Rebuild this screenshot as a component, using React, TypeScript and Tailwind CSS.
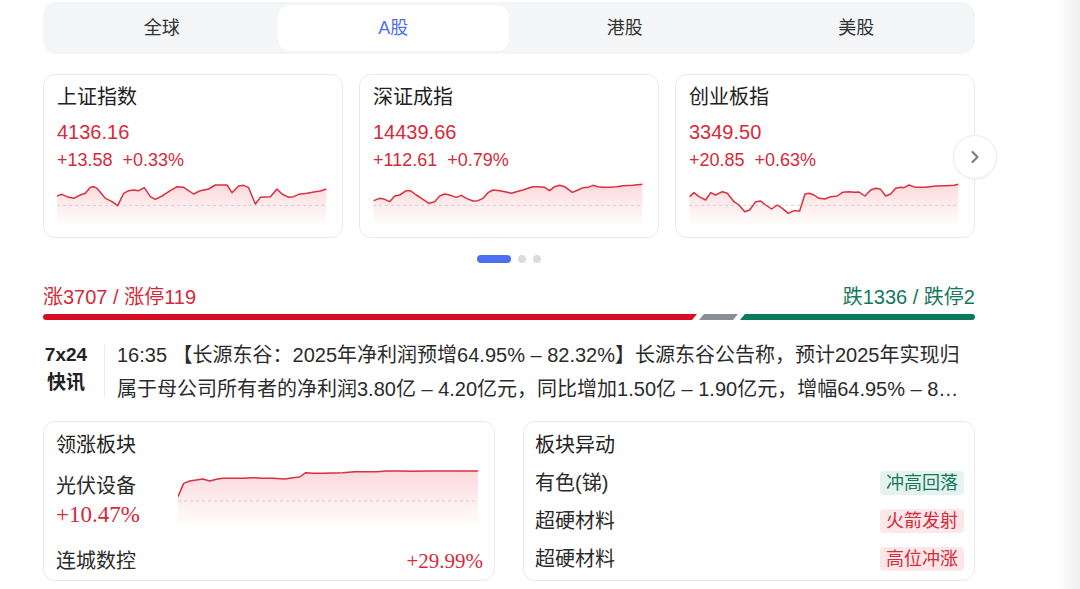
import { ChevronRight } from "lucide-react";

const tabs = ["全球", "A股", "港股", "美股"];

const indices = [
  {
    name: "上证指数",
    value: "4136.16",
    change: "+13.58",
    pct: "+0.33%",
    line:
      "50,378 65,373 80,380 100,385 120,375 135,370 150,352 160,350 170,355 195,385 215,395 232,407 250,370 265,362 280,360 295,362 312,353 330,380 345,388 365,378 385,365 410,350 430,352 460,372 480,362 505,357 525,345 560,345 575,368 595,348 610,346 625,353 645,402 660,382 690,380 710,357 725,372 745,382 760,380 775,373 800,370 825,365 840,363 858,357",
  },
  {
    name: "深证成指",
    value: "14439.66",
    change: "+112.61",
    pct: "+0.79%",
    line:
      "52,392 70,385 85,388 100,395 115,378 130,375 150,362 162,362 180,375 200,388 218,400 235,395 250,378 265,372 280,375 300,382 315,376 330,385 350,393 365,392 380,385 395,368 410,360 430,362 450,366 465,370 480,365 500,360 515,355 530,350 545,350 565,352 580,362 595,350 610,346 625,350 648,367 665,360 680,353 695,352 710,346 725,350 740,352 760,352 780,350 800,347 830,346 858,343",
  },
  {
    name: "创业板指",
    value: "3349.50",
    change: "+20.85",
    pct: "+0.63%",
    line:
      "52,380 65,368 80,380 100,390 115,368 130,375 150,365 165,370 185,395 200,405 217,425 232,420 250,395 265,393 280,405 298,417 315,405 330,415 348,430 365,422 382,423 398,372 410,370 425,375 440,385 458,387 475,380 495,378 510,367 530,365 545,367 560,366 578,378 595,360 610,355 625,358 640,378 655,372 670,355 685,352 695,353 710,345 730,352 760,352 790,348 820,347 845,346 858,343",
  },
];

const sectorLine =
  "415,245 432,205 450,198 470,195 490,192 510,198 530,193 550,190 580,190 610,190 640,188 670,190 700,190 735,192 760,188 780,186 798,173 820,175 850,175 880,174 910,173 945,170 980,170 1010,170 1040,168 1080,168 1120,169 1160,168 1200,168 1250,168 1315,168";

const moves = [
  { name: "有色(锑)", tag: "冲高回落", up: false },
  { name: "超硬材料", tag: "火箭发射", up: true },
  { name: "超硬材料", tag: "高位冲涨", up: true },
];

function Spark({
  id,
  points,
  x0,
  x1,
  top,
  bottom,
  base,
  w,
  h,
}: {
  id: string;
  points: string;
  x0: number;
  x1: number;
  top: number;
  bottom: number;
  base: number;
  w: number;
  h: number;
}) {
  const first = points.split(" ")[0].split(",")[0];
  const last = points.split(" ").slice(-1)[0].split(",")[0];
  return (
    <svg
      width={w}
      height={h}
      viewBox={`${x0} ${top} ${x1 - x0} ${bottom - top}`}
      preserveAspectRatio="none"
      className="block"
    >
      <defs>
        <linearGradient id={id} x1="0" y1="0" x2="0" y2="1">
          <stop offset="0" stopColor="#f04452" stopOpacity="0.2" />
          <stop offset="1" stopColor="#f04452" stopOpacity="0" />
        </linearGradient>
      </defs>
      <polygon points={`${first},${bottom} ${points} ${last},${bottom}`} fill={`url(#${id})`} />
      <line
        x1={x0}
        x2={x1}
        y1={base}
        y2={base}
        stroke="#cfcfd3"
        strokeWidth="1"
        strokeDasharray="3 3"
        vectorEffect="non-scaling-stroke"
      />
      <polyline
        points={points}
        fill="none"
        stroke="#d8303d"
        strokeWidth="1.5"
        strokeLinejoin="round"
        vectorEffect="non-scaling-stroke"
      />
    </svg>
  );
}

export default function App() {
  return (
    <div className="flex min-h-[589px] bg-white font-['Liberation_Sans','Noto_Sans_CJK_SC',sans-serif] text-[#2b2b2b]">
      <div className="w-[1056px] pl-[43px]">
        <div className="w-[932px]">
          {/* market tabs */}
          <div className="mt-[2px] grid h-[52px] grid-cols-4 rounded-[14px] bg-[#f4f5f7] p-[3px]">
            {tabs.map((t) => (
              <div
                key={t}
                className={
                  t === "A股"
                    ? "flex items-center justify-center rounded-[12px] bg-white text-[18px] text-[#4e6ef2]"
                    : "flex items-center justify-center text-[18px] text-[#333]"
                }
              >
                {t}
              </div>
            ))}
          </div>

          {/* index cards */}
          <div className="relative mt-[20px] grid grid-cols-3 gap-[16px]">
            {indices.map((c, i) => (
              <div key={c.name} className="h-[164px] rounded-[12px] border border-[#e8e8eb] px-[13px] pt-[8px]">
                <div className="text-[20px] leading-[28px] text-[#222]">{c.name}</div>
                <div className="mt-[7px] text-[20px] leading-[28px] text-[#d42a3a]">{c.value}</div>
                <div className="mt-[1px] flex gap-[10px] text-[18px] leading-[26px] text-[#d42a3a]">
                  <span>{c.change}</span>
                  <span>{c.pct}</span>
                </div>
                <div className="mt-[7px]">
                  <Spark
                    id={`g${i}`}
                    points={c.line}
                    x0={50}
                    x1={860}
                    top={330}
                    bottom={471}
                    base={406}
                    w={270}
                    h={47}
                  />
                </div>
              </div>
            ))}
            <div className="absolute left-[910px] top-[61px] flex h-[44px] w-[44px] items-center justify-center rounded-full border border-[#ececef] bg-white shadow-[0_1px_3px_rgba(0,0,0,0.05)]">
              <ChevronRight size={20} strokeWidth={2.6} className="text-[#7c7c80]" />
            </div>
          </div>

          {/* pager */}
          <div className="mt-[17px] flex justify-center gap-[7px]">
            <div className="h-[8px] w-[34px] rounded-full bg-[#4e6ef2]" />
            <div className="h-[8px] w-[8px] rounded-full bg-[#dcdcdf]" />
            <div className="h-[8px] w-[8px] rounded-full bg-[#dcdcdf]" />
          </div>

          {/* breadth */}
          <div className="mt-[21px] flex justify-between text-[20px] leading-[26px]">
            <span className="text-[#d42a3a]">涨3707 / 涨停119</span>
            <span className="text-[#13795b]">跌1336 / 跌停2</span>
          </div>
          <svg width="932" height="6" viewBox="0 0 932 6" className="mt-[4px] block">
            <path d="M3 0 H654 L649 6 H3 A3 3 0 0 1 3 0 Z" fill="#d70c26" />
            <path d="M661 0 H695 L690 6 H656 Z" fill="#8b8e94" />
            <path d="M702 0 H929 A3 3 0 0 1 929 6 H697 Z" fill="#0b7a5b" />
          </svg>

          {/* 7x24 news */}
          <div className="mt-[18px] flex">
            <div className="flex w-[46px] flex-col items-center pt-[3px] text-[19px] font-bold leading-[28px] text-[#222]">
              <span>7x24</span>
              <span>快讯</span>
            </div>
            <div className="ml-[15px] mt-[7px] h-[52px] w-px bg-[#ececee]" />
            <div className="ml-[12px] w-[858px] text-[20px] leading-[34px]">
              <div className="whitespace-nowrap">
                16:35 【长源东谷：2025年净利润预增64.95% – 82.32%】长源东谷公告称，预计2025年实现归
              </div>
              <div className="whitespace-nowrap">
                属于母公司所有者的净利润3.80亿 – 4.20亿元，同比增加1.50亿 – 1.90亿元，增幅64.95% – 8…
              </div>
            </div>
          </div>

          {/* sectors */}
          <div className="mt-[15px] grid grid-cols-2 gap-[28px]">
            <div className="h-[160px] rounded-[12px] border border-[#e8e8eb] pl-[12px] pr-[11px] pt-[9px]">
              <div className="text-[20px] leading-[28px] text-[#222]">领涨板块</div>
              <div className="mt-[11px] flex">
                <div className="w-[122px] pt-[2px]">
                  <div className="text-[20px] leading-[28px]">光伏设备</div>
                  <div className="font-['Liberation_Serif',serif] text-[23px] leading-[30px] text-[#d42a3a]">+10.47%</div>
                </div>
                <Spark
                  id="gs"
                  points={sectorLine}
                  x0={415}
                  x1={1315}
                  top={165}
                  bottom={345}
                  base={258}
                  w={300}
                  h={60}
                />
              </div>
              <div className="mt-[17px] flex items-center justify-between leading-[28px]">
                <span className="text-[20px]">连城数控</span>
                <span className="font-['Liberation_Serif',serif] text-[21px] text-[#d42a3a]">+29.99%</span>
              </div>
            </div>

            <div className="h-[160px] rounded-[12px] border border-[#e8e8eb] pl-[11px] pr-[10px] pt-[9px]">
              <div className="text-[20px] leading-[28px] text-[#222]">板块异动</div>
              <div className="mt-[5px]">
                {moves.map((m, i) => (
                  <div key={i} className="flex h-[38px] items-center justify-between">
                    <span className="text-[20px]">{m.name}</span>
                    <span
                      className={
                        m.up
                          ? "rounded-[4px] bg-[#fde7e9] px-[6px] text-[18px] leading-[24px] text-[#d42a3a]"
                          : "rounded-[4px] bg-[#e6f2ee] px-[6px] text-[18px] leading-[24px] text-[#137a5c]"
                      }
                    >
                      {m.tag}
                    </span>
                  </div>
                ))}
              </div>
            </div>
          </div>
        </div>
      </div>
      <div className="flex-1 bg-linear-to-r from-white to-[#efeff0]" />
    </div>
  );
}
